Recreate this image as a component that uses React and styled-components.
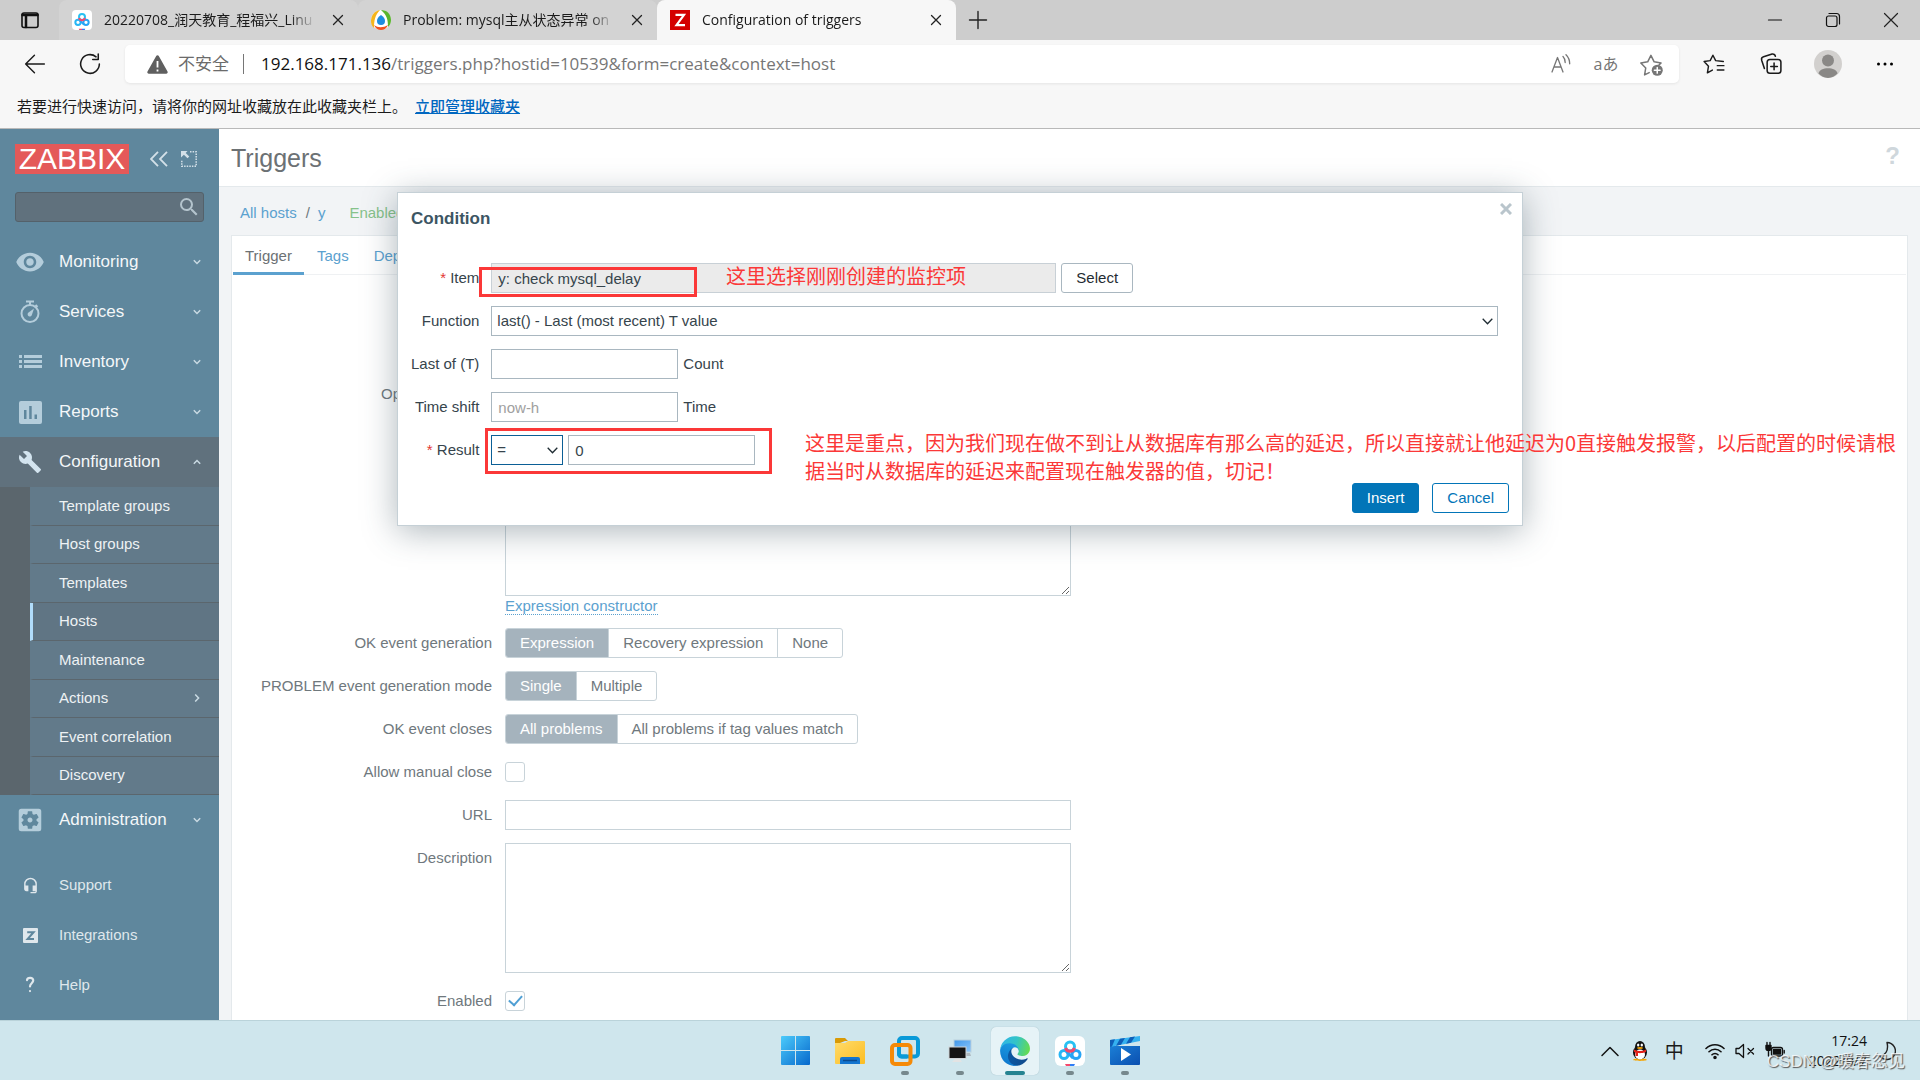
import React from 'react';
import styled, { createGlobalStyle } from 'styled-components';
import {
  MdBuild,
  MdHeadsetMic,
  MdSearch,
  MdSettingsApplications,
  MdVisibility
} from 'react-icons/md';

const uiFont = `'Open Sans', 'Noto Sans CJK SC', sans-serif`;
const pageFont = `'Liberation Sans', Arial, sans-serif`;

const GlobalStyle = createGlobalStyle`
  * {
    box-sizing: border-box;
  }

  body {
    margin: 0;
    overflow: hidden;
  }

  button, input, select, textarea {
    font: inherit;
    color: inherit;
    margin: 0;
  }

  button {
    padding: 0;
    border: 0;
    background: none;
  }

  a {
    text-decoration: none;
  }

  svg {
    display: block;
    flex: none;
  }
`;

const Screen = styled.div`
  display: flex;
  flex-direction: column;
  height: 100vh;
  font-family: ${uiFont};
`;

/* ---------- browser chrome ---------- */

const TabStrip = styled.div`
  display: flex;
  height: 40px;
  background: #cdcdcd;
`;

const TabMenuButton = styled.button`
  display: flex;
  align-items: center;
  justify-content: center;
  width: 59px;
`;

const BrowserTab = styled.div`
  display: flex;
  align-items: center;
  gap: 12px;
  width: 299px;
  padding: 0 10px 0 13px;
  border-radius: 8px 8px 0 0;
  background: ${({ $active }) => ($active ? '#f7f7f7' : '#d3d3d3')};
`;

const BrowserTabTitle = styled.span`
  flex: 1;
  overflow: hidden;
  white-space: nowrap;
  font-size: 14px;
  line-height: 24px;
  color: #1b1b1b;
  mask-image: linear-gradient(to right, #000 88%, transparent);
`;

const TabButton = styled.button`
  display: flex;
  align-items: center;
  justify-content: center;
  width: ${({ $wide }) => ($wide ? '44px' : '20px')};
  height: ${({ $wide }) => ($wide ? '40px' : '20px')};
`;

const WindowControls = styled.div`
  display: flex;
  margin-left: auto;
`;

const WindowButton = styled.button`
  display: flex;
  align-items: center;
  justify-content: center;
  width: 58px;
`;

const Toolbar = styled.div`
  display: flex;
  align-items: center;
  gap: 15px;
  height: 48px;
  padding: 0 15px;
  background: #f7f7f7;
`;

const ToolbarButton = styled.button`
  display: flex;
  align-items: center;
  justify-content: center;
  width: 40px;
  height: 36px;
  color: ${({ $muted }) => ($muted ? '#767676' : '#1b1b1b')};
  font-size: 16px;
  line-height: 20px;
`;

const ToolbarGroup = styled.div`
  display: flex;
  gap: ${({ $gap }) => $gap}px;
`;

const AddressBar = styled.div`
  display: flex;
  flex: 1;
  align-items: center;
  gap: 10px;
  height: 38px;
  padding: 0 8px 0 22px;
  border-radius: 5px;
  background: #fff;
  box-shadow: 0 1px 3px rgba(0, 0, 0, 0.08);
`;

const SecurityNote = styled.span`
  padding-right: 14px;
  border-right: 1px solid #767676;
  font-size: 17px;
  line-height: 20px;
  color: #6b6b6b;
`;

const Address = styled.div`
  flex: 1;
  padding-left: 7px;
  font-size: 17px;
  line-height: 24px;
  color: #767676;
`;

const AddressHost = styled.span`
  color: #111;
`;

const FavoritesBar = styled.div`
  display: flex;
  align-items: center;
  gap: 8px;
  height: 41px;
  padding: 0 17px 6px;
  border-bottom: 1px solid #b9b9b9;
  background: #f7f7f7;
  font-size: 15px;
  color: #1b1b1b;
`;

const FavoritesLink = styled.a`
  color: #0067c0;
  font-weight: 500;
  text-decoration: underline;
`;

/* ---------- sidebar ---------- */

const Page = styled.div`
  position: relative;
  display: flex;
  flex: 1;
  min-height: 0;
  overflow: hidden;
  font-family: ${pageFont};
  font-size: 15px;
  line-height: 20px;
`;

const Sidebar = styled.nav`
  flex: none;
  width: 219px;
  background: #5f879d;
`;

const SidebarHead = styled.div`
  display: flex;
  align-items: center;
  padding: 15px 22px 18px 15px;
`;

const Logo = styled.a`
  width: 114px;
  height: 30px;
  margin-right: 21px;
  background: #e45959;
  color: #fff;
  font-size: 30px;
  line-height: 30px;
  text-align: center;
`;

const SidebarToggles = styled.div`
  display: flex;
  gap: 13px;
`;

const SearchBox = styled.div`
  position: relative;
  margin: 0 15px 15px;
  color: #b4c4cd;

  svg {
    position: absolute;
    top: 3px;
    right: 3px;
  }
`;

const SearchInput = styled.input`
  display: block;
  width: 100%;
  height: 30px;
  border: 1px solid #54616a;
  border-radius: 3px;
  background: #60717d;
`;

const MenuItem = styled.a`
  display: flex;
  align-items: center;
  gap: 15px;
  height: 50px;
  padding: 0 18px 0 16px;
  background: ${({ $active }) => ($active ? '#60717d' : 'none')};
  color: ${({ $active }) => ($active ? '#d3e4ef' : '#b4cddb')};
`;

const MenuIcon = styled.span`
  display: flex;
  justify-content: center;
  width: 28px;
`;

const MenuLabel = styled.span`
  flex: 1;
  color: ${({ $small }) => ($small ? '#dfe7ec' : '#f4f7f9')};
  font-size: ${({ $small }) => ($small ? '15px' : '17px')};
`;

const Submenu = styled.div`
  display: grid;
  grid-auto-rows: 1fr;
  height: 308px;
  border-left: 30px solid #5b666d;
  background: #627a8a;
`;

const SubmenuItem = styled.a`
  display: flex;
  align-items: center;
  justify-content: space-between;
  padding: 0 18px 0 26px;
  border-left: 3px solid ${({ $active }) => ($active ? '#b0dcfa' : 'transparent')};
  border-bottom: 1px solid #5b666d;
  background: ${({ $active }) => ($active ? '#607584' : 'none')};
  color: #eef2f4;
`;

const SupportMenu = styled.div`
  padding-top: 15px;
`;

/* ---------- page body ---------- */

const Main = styled.main`
  display: flex;
  flex: 1;
  flex-direction: column;
  min-width: 0;
  background: #f2f4f6;
  color: #6f787d;
`;

const PageHeader = styled.header`
  display: flex;
  align-items: center;
  justify-content: space-between;
  height: 58px;
  padding: 0 20px 0 12px;
  border-bottom: 1px solid #e4e9ec;
  background: #fff;
`;

const PageTitle = styled.h1`
  margin: 0;
  font-size: 25px;
  font-weight: normal;
  line-height: 30px;
  color: #6c7174;
`;

const HelpLink = styled.a`
  padding-bottom: 4px;
  color: #cfd7dc;
  font-size: 24px;
  font-weight: bold;
`;

const Breadcrumbs = styled.div`
  display: flex;
  padding: 16px 21px 12px;
`;

const Crumb = styled.a`
  margin-right: ${({ $last }) => ($last ? '24px' : '9px')};
  color: #5ba1cf;
`;

const CrumbSlash = styled.span`
  margin-right: 8px;
`;

const HostStatus = styled.span`
  color: #86c28a;
`;

const Panel = styled.section`
  flex: 1;
  min-height: 0;
  margin: 0 12px;
  padding: 0 1px;
  border: 1px solid #e4e9ec;
  border-bottom: 0;
  background: #fff;
`;

const Tabs = styled.div`
  display: flex;
  gap: 1px;
  height: 39px;
  border-bottom: 1px solid #eff1f3;
`;

const Tab = styled.a`
  height: 39px;
  padding: 10px 12px 0;
  border-bottom: 3px solid ${({ $active }) => ($active ? '#5ba1cf' : 'transparent')};
  color: ${({ $active }) => ($active ? '#6c7174' : '#5ba1cf')};
`;

const TriggerForm = styled.form`
  display: grid;
  grid-template-columns: 259px 566px;
  column-gap: 13px;
  row-gap: 13px;
  padding-top: 104px;
`;

const FieldLabel = styled.label`
  line-height: 30px;
  text-align: right;
`;

const Field = styled.div`
  display: flex;
  flex-direction: column;
  align-items: flex-start;
  justify-content: center;
  grid-column: 2;
`;

const TextInput = styled.input`
  width: 100%;
  height: 30px;
  padding: 0 6px;
  border: 1px solid #c8d3d9;
  background: #fff;
`;

const TextArea = styled.textarea`
  display: block;
  width: 100%;
  height: ${({ $tall }) => ($tall ? '174px' : '130px')};
  border: 1px solid #c8d3d9;
  background: #fff;
  resize: vertical;
`;

const DottedLink = styled.a`
  margin-top: 2px;
  border-bottom: 1px dotted #5ba1cf;
  color: #5ba1cf;
  line-height: 16px;
`;

const Segments = styled.div`
  display: flex;
  border: 1px solid #c8d3d9;
  border-radius: 3px;
  overflow: hidden;
`;

const Segment = styled.label`
  position: relative;
  padding: 0 14px;
  line-height: 28px;

  & + & {
    border-left: 1px solid #c8d3d9;
  }

  &:has(input:checked) {
    background: #a5b3bd;
    color: #fff;
  }

  input {
    position: absolute;
    inset: 0;
    opacity: 0;
  }
`;

const Checkbox = styled.input`
  appearance: none;
  display: grid;
  place-content: center;
  width: 20px;
  height: 20px;
  border: 1px solid #c8d3d9;
  border-radius: 3px;
  background: #fff;

  &:checked::before {
    content: '';
    width: 11px;
    height: 6px;
    margin-top: -4px;
    border: solid #4f9fd4;
    border-width: 0 0 2px 2px;
    transform: rotate(-48deg);
  }
`;

/* ---------- condition dialog ---------- */

const Overlay = styled.div`
  position: absolute;
  inset: 0;
  display: flex;
  align-items: flex-start;
  justify-content: center;
  padding-top: 63px;
`;

const Dialog = styled.div`
  position: relative;
  width: 1126px;
  padding: 14px 13px 12px;
  border: 1px solid #c5d0d6;
  background: #fff;
  box-shadow: 0 5px 32px rgba(50, 72, 84, 0.4);
  color: #36444c;
`;

const DialogTitle = styled.h2`
  margin: 0 0 32px;
  font-size: 17px;
  line-height: 24px;
  color: #3c5563;
`;

const DialogClose = styled.button`
  position: absolute;
  top: 10px;
  right: 10px;
`;

const DialogForm = styled.div`
  display: grid;
  grid-template-columns: max-content 1007px;
  column-gap: 12px;
  row-gap: 13px;
`;

const Required = styled.span`
  color: #e33734;
`;

const DialogField = styled.div`
  display: flex;
  align-items: center;
  gap: 5px;
`;

const DialogInput = styled(TextInput)`
  width: ${({ $wide }) => ($wide ? '565px' : '187px')};
  border-color: ${({ readOnly }) => (readOnly ? '#c8d0d6' : '#a9b7c0')};
  background: ${({ readOnly }) => (readOnly ? '#ebebeb' : '#fff')};

  &::placeholder {
    color: #a0a0a0;
  }
`;

const SelectBox = styled.div`
  position: relative;
  width: ${({ $small }) => ($small ? '72px' : '100%')};

  svg {
    position: absolute;
    top: 12px;
    right: 5px;
    pointer-events: none;
  }
`;

const Select = styled.select`
  appearance: none;
  display: block;
  width: 100%;
  height: 30px;
  padding: 0 5px;
  border: 1px solid ${({ $focused }) => ($focused ? '#0b5f96' : '#a9b7c0')};
  border-radius: 0;
  background: #fff;
`;

const Button = styled.button`
  height: 30px;
  padding: 0 14px;
  border: 1px solid ${({ $kind }) => ($kind ? '#0275b8' : '#a9b7c0')};
  border-radius: 3px;
  background: ${({ $kind }) => ($kind === 'primary' ? '#0275b8' : '#fff')};
  color: ${({ $kind }) =>
    $kind === 'primary' ? '#fff' : $kind === 'outline' ? '#0275b8' : '#1f2c33'};
`;

const DialogFooter = styled.div`
  display: flex;
  justify-content: flex-end;
  gap: 13px;
  margin-top: 18px;
`;

// Red frames and notes drawn over the dialog
const Mark = styled.div`
  position: absolute;
  top: ${({ $top }) => $top}px;
  left: ${({ $left }) => $left}px;
  width: ${({ $width }) => $width}px;
  height: ${({ $height }) => $height}px;
  border: 3px solid #fb3838;
  pointer-events: none;
`;

const Note = styled.p`
  position: absolute;
  top: ${({ $top }) => $top}px;
  left: ${({ $left }) => $left}px;
  margin: 0;
  color: #fb3838;
  font-family: 'Noto Sans CJK SC', sans-serif;
  font-size: 20px;
  line-height: 28px;
  white-space: nowrap;
`;

/* ---------- taskbar ---------- */

const Taskbar = styled.footer`
  position: relative;
  display: grid;
  grid-template-columns: 1fr auto 1fr;
  align-items: center;
  height: 60px;
  border-top: 1px solid #bad3da;
  background: #cfe6ed;
`;

const Apps = styled.div`
  display: flex;
  grid-column: 2;
  gap: 7px;
`;

const AppButton = styled.button`
  position: relative;
  display: flex;
  align-items: center;
  justify-content: center;
  width: 48px;
  height: 48px;
  border-radius: 5px;
  background: ${({ $state }) => ($state === 'active' ? '#e6f3f7' : 'none')};
  box-shadow: ${({ $state }) =>
    $state === 'active' ? '0 0 1px rgba(0, 60, 80, 0.3)' : 'none'};

  &::after {
    content: '';
    position: absolute;
    bottom: 0;
    width: ${({ $state }) => ($state === 'active' ? '20px' : '8px')};
    height: 4px;
    border-radius: 2px;
    background: ${({ $state }) =>
      $state === 'active' ? '#268391' : $state ? '#76888d' : 'none'};
  }
`;

const Tray = styled.div`
  display: flex;
  align-items: center;
  justify-content: flex-end;
  padding-right: 24px;
`;

const TrayGroup = styled.div`
  display: flex;
  align-items: center;
  gap: 10px;
  margin-right: ${({ $space }) => $space}px;
`;

const InputMode = styled.span`
  width: 20px;
  font-size: 19px;
  line-height: 24px;
  color: #1b1b1b;
`;

const Clock = styled.div`
  margin-right: 12px;
  font-size: 14px;
  line-height: 20px;
  text-align: right;
  color: #111;
`;

const Watermark = styled.div`
  position: absolute;
  right: 15px;
  bottom: 5px;
  color: rgba(255, 255, 255, 0.75);
  font-family: 'Liberation Sans', 'Noto Sans CJK SC', sans-serif;
  font-size: 17px;
  line-height: 26px;
  text-shadow: 1px 1px 1px #555;
  white-space: nowrap;
`;

/* ---------- icons ---------- */

const Stroke = ({ size = 20, width = 1.5, color = 'currentColor', children }) => (
  <svg
    width={size}
    height={size}
    viewBox="0 0 20 20"
    fill="none"
    stroke={color}
    strokeWidth={width}
    strokeLinecap="round"
    strokeLinejoin="round"
  >
    {children}
  </svg>
);

const Chevron = ({ dir = 'down' }) => (
  <svg width="8" height="8" viewBox="0 0 8 8" fill="none" stroke="#c9dae3" strokeWidth="1.5">
    {dir === 'down' && <path d="M.8 2.2 4 5.5l3.2-3.3" />}
    {dir === 'up' && <path d="M.8 5.8 4 2.5l3.2 3.3" />}
    {dir === 'right' && <path d="M2.2.5 5.6 4 2.2 7.5" />}
  </svg>
);

const SelectArrow = () => (
  <svg width="11" height="7" viewBox="0 0 11 7" fill="none" stroke="#1f2c33" strokeWidth="1.3">
    <path d="m.7.8 4.8 5 4.8-5" />
  </svg>
);

const CloseIcon = () => (
  <Stroke size={20} width={1.3} color="#222">
    <path d="m5.5 5.5 9 9m0-9-9 9" />
  </Stroke>
);

const TimerIcon = () => (
  <svg width="20" height="24" viewBox="0 0 20 24" fill="none" stroke="currentColor">
    <circle cx="10" cy="13.5" r="8.5" strokeWidth="2" />
    <path d="M6 1.5h8M10 2v3M15.5 5l2 2" strokeWidth="2" />
    <path d="m14 8.5-2 6a2.2 2.2 0 1 1-3.500-2z" fill="currentColor" stroke="none" />
  </svg>
);

const ListIcon = () => (
  <svg width="23" height="14" viewBox="0 0 23 14" fill="currentColor">
    <path d="M0 0h3v3H0zM5 0h18v3H5zM0 5h3v3H0zM5 5h18v3H5zM0 10h3v3H0zM5 10h18v3H5z" />
  </svg>
);

const ReportsIcon = () => (
  <svg width="23" height="23" viewBox="0 0 23 23">
    <rect width="23" height="23" rx="2" fill="currentColor" />
    <path d="M5 9h2.500v9H5zM10.200 5h2.500v13h-2.500zM15.500 13.500H18V18h-2.500z" fill="#5f879d" />
  </svg>
);

const KioskIcon = () => (
  <svg width="16" height="16" viewBox="0 0 16 16" fill="none" stroke="#d3e0e8" strokeWidth="1.5">
    <path d="M9 .8h6.200v14.400H.8V9" strokeDasharray="1.500 1.100" />
    <path d="M0 0h6.500L4.700 1.900l3.600 3.600-1.800 1.800-3.600-3.600L0 6.500z" fill="#d3e0e8" stroke="none" />
  </svg>
);

const ZIcon = () => (
  <svg width="15" height="15" viewBox="0 0 15 15">
    <rect width="15" height="15" rx="1" fill="#dfe7ec" />
    <path d="M4.200 4.200h6.400l-6 6.800h6.400" fill="none" stroke="#5f879d" strokeWidth="2" />
  </svg>
);

const BaiduIcon = ({ size }) => (
  <svg width={size} height={size} viewBox="0 0 30 30" fill="none">
    <rect width="30" height="30" rx="6" fill="#fff" />
    <circle cx="9" cy="18.500" r="4" stroke="#27b6f5" strokeWidth="3" />
    <circle cx="21" cy="18.500" r="4" stroke="#27a4f5" strokeWidth="3" />
    <path d="m11.500 15.500 6.500 6.500" stroke="#27a4f5" strokeWidth="3" />
    <circle cx="15" cy="10.500" r="4.500" stroke="#27c1f2" strokeWidth="3" />
    <path d="M10.600 12a4.600 4.600 0 0 0 8.800 0" stroke="#f4496d" strokeWidth="3" />
    <path d="M10 28h5v2h-4z" fill="#f4496d" />
    <path d="M15 28h5l-1 2h-4z" fill="#2f7df6" />
  </svg>
);

const RingIcon = () => (
  <svg width="20" height="20" viewBox="0 0 20 20">
    <circle cx="10" cy="10" r="10" fill="#fff" />
    <path d="M9 0C3 1 0 6 0 11c0 3 1 5 3 7 0-7 1-13 6-18z" fill="#f5b51b" />
    <path d="M10 0c6 0 10 4 10 10 0 3-1 5-3 7 0-7-1-12-7-17z" fill="#59b52c" />
    <path d="M3 15c4 3 9 3 14 0-1 3-4 5-7 5s-6-2-7-5z" fill="#f0531f" />
    <path d="M10 5c3 2 4 4 4 6a4 4 0 0 1-8 0c0-2 1-4 4-6z" fill="#1c8ce0" />
  </svg>
);

const WindowsIcon = () => (
  <svg width="29" height="29" viewBox="0 0 29 29">
    <defs>
      <linearGradient id="win" x1="0" y1="0" x2="29" y2="29" gradientUnits="userSpaceOnUse">
        <stop offset="0" stopColor="#4ccbfb" />
        <stop offset="1" stopColor="#0668cc" />
      </linearGradient>
    </defs>
    <path d="M0 1a1 1 0 0 1 1-1h13v14H0zM15 0h13a1 1 0 0 1 1 1v13H15zM0 15h14v14H1a1 1 0 0 1-1-1zM15 15h14v13a1 1 0 0 1-1 1H15z" fill="url(#win)" />
  </svg>
);

const FolderIcon = () => (
  <svg width="30" height="28" viewBox="0 0 30 28">
    <defs>
      <linearGradient id="folder" x1="0" y1="0" x2="1" y2="1">
        <stop offset="0" stopColor="#ffdb6b" />
        <stop offset="1" stopColor="#fcbd22" />
      </linearGradient>
    </defs>
    <path d="M0 2a1 1 0 0 1 1-1h9l3 3h-3L0 8z" fill="#d99a05" />
    <path d="M0 6h10l3-2h16a1 1 0 0 1 1 1v21a1 1 0 0 1-1 1H1a1 1 0 0 1-1-1z" fill="url(#folder)" />
    <path d="M5 27v-5a2 2 0 0 1 2-2h16a2 2 0 0 1 2 2v5z" fill="#1475cf" />
    <path d="M8 23.500h14" stroke="#0b4a8f" strokeWidth="1.500" />
  </svg>
);

const VmwareIcon = () => (
  <svg width="30" height="30" viewBox="0 0 30 30" fill="none" strokeWidth="4">
    <rect x="9" y="2" width="19" height="18.500" rx="3" stroke="#0a9ad8" />
    <rect x="2" y="9" width="18.500" height="19" rx="3" stroke="#f58a07" />
    <path d="M9 14v4a2.500 2.500 0 0 0 2.500 2.500H17" stroke="#0a9ad8" />
  </svg>
);

const RemoteIcon = () => (
  <svg width="24" height="24" viewBox="0 0 24 24">
    <defs>
      <linearGradient id="remote" x1="0" y1="0" x2="1" y2="1">
        <stop offset="0" stopColor="#3f97ea" />
        <stop offset="1" stopColor="#8cc6fa" />
      </linearGradient>
    </defs>
    <rect x="6" y="1" width="17" height="12" fill="url(#remote)" stroke="#b9cfde" />
    <path d="M18 14h4l1 3h-5z" fill="#aeb9c0" />
    <rect x="1" y="8" width="17" height="11.500" fill="#141414" stroke="#cfd4d8" />
    <path d="M7 20h5l2 3H4z" fill="#e3e3e3" />
  </svg>
);

const EdgeIcon = () => (
  <svg width="30" height="30" viewBox="4 4 257 257">
    <defs>
      <linearGradient id="edgeA" x1="0" y1="0" x2="1" y2="0">
        <stop offset="0" stopColor="#0c59a4" />
        <stop offset="1" stopColor="#114a8b" />
      </linearGradient>
      <linearGradient id="edgeB" x1="0.600" y1="0" x2="0.300" y2="1">
        <stop offset="0" stopColor="#1b9de2" />
        <stop offset="1" stopColor="#0d75cc" />
      </linearGradient>
      <linearGradient id="edgeC" x1="0" y1="0.400" x2="1" y2="0.600">
        <stop offset="0" stopColor="#2fb5e8" />
        <stop offset="0.500" stopColor="#33c4c6" />
        <stop offset="1" stopColor="#66dc4e" />
      </linearGradient>
    </defs>
    <path
      fill="url(#edgeA)"
      d="M235.680 195.460a93.730 93.730 0 01-10.540 4.710 101.870 101.870 0 01-35.900 6.460c-47.320 0-88.540-32.550-88.540-74.320A31.480 31.480 0 01117.130 105c-42.800 1.800-53.800 46.400-53.800 72.530 0 73.880 68.090 81.370 82.760 81.370 7.910 0 19.840-2.300 27-4.560l1.310-.440a128.340 128.340 0 0066.600-52.800 4 4 0 00-5.320-5.640z"
    />
    <path
      fill="url(#edgeB)"
      d="M110.340 246.340A79.200 79.200 0 0187.600 225a80.720 80.720 0 0129.530-120c3.120-1.470 8.450-4.130 15.540-4a32.350 32.350 0 0125.690 13 31.880 31.880 0 016.360 18.660c0-.210 24.460-79.600-80-79.600-43.900 0-80 41.660-80 78.210a130.150 130.150 0 0012.110 56 128 128 0 00156.380 67.110 75.550 75.550 0 01-62.780-8z"
    />
    <path
      fill="url(#edgeC)"
      d="M156.940 153.780c-.810 1.050-3.300 2.500-3.300 5.660 0 2.610 1.700 5.120 4.720 7.230 14.380 10 41.490 8.680 41.560 8.680a59.560 59.560 0 0030.270-8.350 61.380 61.380 0 0030.430-52.880c.260-22.410-8-37.310-11.340-43.910C228.090 28.760 182.350 5.080 132.610 5.080A128 128 0 004.630 131.270c.480-36.540 36.800-66.050 80-66.050 3.500 0 23.460.340 42 10.070 16.340 8.580 24.900 18.940 30.850 29.210 6.180 10.670 7.280 24.150 7.280 29.520s-2.740 13.330-7.820 19.760z"
    />
  </svg>
);

const VideoIcon = () => (
  <svg width="30" height="29" viewBox="0 0 30 29">
    <defs>
      <linearGradient id="video" x1="0" y1="0" x2="1" y2="1">
        <stop offset="0" stopColor="#1b7fd6" />
        <stop offset="1" stopColor="#0b4fb0" />
      </linearGradient>
    </defs>
    <path d="M0 10h30v18a1 1 0 0 1-1 1H1a1 1 0 0 1-1-1z" fill="url(#video)" />
    <path d="M0 4 30 0v5L0 11z" fill="#35b1f0" />
    <path d="m0 4 5-.700-3 7.300-2 .400zM10 2.700l5-.700-4 6.800-5 1zM20 1.300l5-.700-4 6.200-5 1z" fill="#0f5fb8" />
    <path d="M11 12v13l10-6.500z" fill="#fff" />
  </svg>
);

const QQIcon = () => (
  <svg width="20" height="20" viewBox="0 0 20 20">
    <ellipse cx="10" cy="11.500" rx="7" ry="7" fill="#111" />
    <ellipse cx="10" cy="6" rx="5" ry="6" fill="#111" />
    <ellipse cx="10" cy="13.500" rx="5" ry="5" fill="#fff" />
    <ellipse cx="8.200" cy="4" rx="1.200" ry="1.600" fill="#fff" />
    <ellipse cx="11.800" cy="4" rx="1.200" ry="1.600" fill="#fff" />
    <ellipse cx="10" cy="7" rx="3" ry="1" fill="#f6a500" />
    <path d="M4 8.500c4 2 8 2 12 0v2.500c-3 1-5 1.300-8 1.100V15H5.500v-3.500L4 11z" fill="#e2231a" />
    <path d="M3 18.800c1-1.500 5-1.500 7 0 2-1.500 6-1.500 7 0 0 1.500-14 1.500-14 0z" fill="#f6a500" />
  </svg>
);

/* ---------- data ---------- */

const browserTabs = [
  { title: '20220708_润天教育_程福兴_Linu', icon: <BaiduIcon size={20} /> },
  { title: 'Problem: mysql主从状态异常 on', icon: <RingIcon /> },
  {
    title: 'Configuration of triggers',
    active: true,
    icon: (
      <svg width="20" height="20" viewBox="0 0 20 20">
        <rect width="20" height="20" fill="#d40000" />
        <path d="M5.500 4.800h8.500L6.500 15.200h8.500" fill="none" stroke="#fff" strokeWidth="2.200" />
      </svg>
    )
  }
];

const menu = [
  { label: 'Monitoring', icon: <MdVisibility size={30} /> },
  { label: 'Services', icon: <TimerIcon /> },
  { label: 'Inventory', icon: <ListIcon /> },
  { label: 'Reports', icon: <ReportsIcon /> }
];

const submenu = [
  'Template groups',
  'Host groups',
  'Templates',
  'Hosts',
  'Maintenance',
  'Actions',
  'Event correlation',
  'Discovery'
];

const supportMenu = [
  { label: 'Support', icon: <MdHeadsetMic size={17} color="#dfe7ec" /> },
  { label: 'Integrations', icon: <ZIcon /> },
  {
    label: 'Help',
    icon: (
      <Stroke size={20} width={2.2} color="#dfe7ec">
        <path d="M7 5.200c.500-3.200 6.500-3 6.200.500-.200 2.600-3.200 2.600-3.200 5.800M10 16v.100" />
      </Stroke>
    )
  }
];

const apps = [
  { name: 'Start', icon: <WindowsIcon /> },
  { name: 'File Explorer', icon: <FolderIcon /> },
  { name: 'VMware', icon: <VmwareIcon />, state: 'open' },
  { name: 'Remote', icon: <RemoteIcon />, state: 'open' },
  { name: 'Edge', icon: <EdgeIcon />, state: 'active' },
  { name: 'Netdisk', icon: <BaiduIcon size={30} />, state: 'open' },
  { name: 'Video', icon: <VideoIcon />, state: 'open' }
];

/* ---------- components ---------- */

const Browser = () => (
  <>
    <TabStrip>
      <TabMenuButton aria-label="Tab actions">
        <Stroke color="#111" width={1.6}>
          <rect x="2" y="3" width="16" height="14.500" rx="2" />
          <path d="M2.500 5h15M6 6v11" strokeWidth="2.500" />
        </Stroke>
      </TabMenuButton>
      {browserTabs.map(({ title, icon, active }) => (
        <BrowserTab key={title} $active={active}>
          {icon}
          <BrowserTabTitle>{title}</BrowserTabTitle>
          <TabButton aria-label="Close tab">
            <CloseIcon />
          </TabButton>
        </BrowserTab>
      ))}
      <TabButton $wide aria-label="New tab">
        <Stroke color="#222" width={1.4}>
          <path d="M10 1.500v17M1.500 10h17" />
        </Stroke>
      </TabButton>
      <WindowControls>
        <WindowButton aria-label="Minimize">
          <Stroke color="#111" width={1.2}>
            <path d="M3.500 10h13" />
          </Stroke>
        </WindowButton>
        <WindowButton aria-label="Restore">
          <Stroke color="#111" width={1.2}>
            <rect x="3.500" y="6" width="10.500" height="10.500" rx="2" />
            <path d="M6 3.500h7.500a3 3 0 0 1 3 3V14" />
          </Stroke>
        </WindowButton>
        <WindowButton aria-label="Close">
          <Stroke color="#222" width={1.2}>
            <path d="m3.500 3.500 13 13m0-13-13 13" />
          </Stroke>
        </WindowButton>
      </WindowControls>
    </TabStrip>

    <Toolbar>
      <ToolbarButton aria-label="Back">
        <Stroke size={22} width={1.3}>
          <path d="M18.500 10h-17m8-8-8 8 8 8" />
        </Stroke>
      </ToolbarButton>
      <ToolbarButton aria-label="Refresh">
        <Stroke size={22} width={1.4}>
          <path d="M18.500 10A8.500 8.500 0 1 1 15.500 3.500M17.500 1v5h-5" />
        </Stroke>
      </ToolbarButton>
      <AddressBar>
        <svg width="21" height="19" viewBox="0 0 21 19">
          <path d="M9.200 1a1.500 1.500 0 0 1 2.600 0l8.700 15.500a1.500 1.500 0 0 1-1.300 2.200H1.800a1.500 1.500 0 0 1-1.300-2.200z" fill="#5f5f5f" />
          <path d="M10.500 6v6.500M10.500 14.500v2" stroke="#fff" strokeWidth="1.800" />
        </svg>
        <SecurityNote>不安全</SecurityNote>
        <Address>
          <AddressHost>192.168.171.136</AddressHost>
          /triggers.php?hostid=10539&amp;form=create&amp;context=host
        </Address>
        <ToolbarGroup $gap={5}>
          <ToolbarButton $muted aria-label="Read aloud">
            <Stroke width={1.3}>
              <path d="m1 18 5.500-14.500L12 18M3 13h7M12 2.500c1.500 1.500 2.200 3.500 2.200 6M15 .8c2.500 2.500 3.700 5.500 3.700 9" />
            </Stroke>
          </ToolbarButton>
          <ToolbarButton $muted>aあ</ToolbarButton>
          <ToolbarButton $muted aria-label="Add favorite">
            <Stroke size={23} width={1.3}>
              <path d="m8 17-4 2 1-6-4.300-4.300 6-1L9.500 2l2.800 5.700 6 1-2 2" />
              <circle cx="15" cy="15" r="4.800" fill="#767676" stroke="none" />
              <path d="M15 12.500v5M12.500 15h5" stroke="#fff" />
            </Stroke>
          </ToolbarButton>
        </ToolbarGroup>
      </AddressBar>
      <ToolbarGroup $gap={17}>
        <ToolbarButton aria-label="Favorites">
          <Stroke size={22} width={1.3}>
            <path d="m8.500 15.500-4.500 2.500 1-6L1 7.700l5.500-.8L9 2l2.500 4.900 7 .8M13 11.500h6M13 15.500h6" />
          </Stroke>
        </ToolbarButton>
        <ToolbarButton aria-label="Collections">
          <Stroke size={22} width={1.4}>
            <rect x="6.500" y="6" width="12.500" height="12.500" rx="2.500" />
            <path d="M12.800 9.200v6M9.800 12.200h6M4 14 1.500 6.500a2.500 2.500 0 0 1 1.700-3L11 1a2.500 2.500 0 0 1 3 2" />
          </Stroke>
        </ToolbarButton>
        <ToolbarButton aria-label="Profile">
          <svg width="28" height="28" viewBox="0 0 28 28">
            <circle cx="14" cy="14" r="14" fill="#d2d0ce" />
            <circle cx="14" cy="10.500" r="6" fill="#8a8886" />
            <path d="M4.500 23.500c1-7 18-7 19 0A14 14 0 0 1 14 28a14 14 0 0 1-9.500-4.500z" fill="#8a8886" />
          </svg>
        </ToolbarButton>
        <ToolbarButton aria-label="Settings and more">
          <svg width="18" height="4" viewBox="0 0 18 4">
            <circle cx="2.500" cy="2" r="1.500" />
            <circle cx="9" cy="2" r="1.500" />
            <circle cx="15.500" cy="2" r="1.500" />
          </svg>
        </ToolbarButton>
      </ToolbarGroup>
    </Toolbar>

    <FavoritesBar>
      <span>若要进行快速访问，请将你的网址收藏放在此收藏夹栏上。</span>
      <FavoritesLink href="#favorites">立即管理收藏夹</FavoritesLink>
    </FavoritesBar>
  </>
);

const SideNav = () => (
  <Sidebar>
    <SidebarHead>
      <Logo href="#dashboard">ZABBIX</Logo>
      <SidebarToggles>
        <svg width="18" height="16" viewBox="0 0 18 16" fill="none" stroke="#d3e0e8" strokeWidth="1.800">
          <path d="M8 .8 1 8l7 7.200M17 .8 10 8l7 7.200" />
        </svg>
        <KioskIcon />
      </SidebarToggles>
    </SidebarHead>
    <SearchBox>
      <SearchInput type="text" aria-label="Search" />
      <MdSearch size={24} />
    </SearchBox>
    {menu.map(({ label, icon }) => (
      <MenuItem key={label} href="#menu">
        <MenuIcon>{icon}</MenuIcon>
        <MenuLabel>{label}</MenuLabel>
        <Chevron />
      </MenuItem>
    ))}
    <MenuItem $active href="#configuration">
      <MenuIcon>
        <MdBuild size={24} />
      </MenuIcon>
      <MenuLabel>Configuration</MenuLabel>
      <Chevron dir="up" />
    </MenuItem>
    <Submenu>
      {submenu.map(label => (
        <SubmenuItem key={label} href="#submenu" $active={label === 'Hosts'}>
          {label}
          {label === 'Actions' && <Chevron dir="right" />}
        </SubmenuItem>
      ))}
    </Submenu>
    <MenuItem href="#administration">
      <MenuIcon>
        <MdSettingsApplications size={30} />
      </MenuIcon>
      <MenuLabel>Administration</MenuLabel>
      <Chevron />
    </MenuItem>
    <SupportMenu>
      {supportMenu.map(({ label, icon }) => (
        <MenuItem key={label} href="#support">
          <MenuIcon>{icon}</MenuIcon>
          <MenuLabel $small>{label}</MenuLabel>
        </MenuItem>
      ))}
    </SupportMenu>
  </Sidebar>
);

const RadioRow = ({ label, name, options }) => (
  <>
    <FieldLabel as="span" id={name}>
      {label}
    </FieldLabel>
    <Field>
      <Segments role="radiogroup" aria-labelledby={name}>
        {options.map((option, i) => (
          <Segment key={option}>
            <input type="radio" name={name} defaultChecked={i === 0} />
            {option}
          </Segment>
        ))}
      </Segments>
    </Field>
  </>
);

const TriggerPage = () => (
  <Main>
    <PageHeader>
      <PageTitle>Triggers</PageTitle>
      <HelpLink href="#help">?</HelpLink>
    </PageHeader>
    <Breadcrumbs>
      <Crumb href="#hosts">All hosts</Crumb>
      <CrumbSlash>/</CrumbSlash>
      <Crumb $last href="#host">
        y
      </Crumb>
      <HostStatus>Enabled</HostStatus>
    </Breadcrumbs>
    <Panel>
      <Tabs>
        <Tab $active href="#trigger">
          Trigger
        </Tab>
        <Tab href="#tags">Tags</Tab>
        <Tab href="#dependencies">Dependencies</Tab>
      </Tabs>
      <TriggerForm>
        <FieldLabel htmlFor="opdata">Operational data</FieldLabel>
        <Field>
          <TextInput id="opdata" />
        </Field>
        <Field>
          <TextArea $tall aria-label="Expression" />
          <DottedLink href="#constructor">Expression constructor</DottedLink>
        </Field>
        <RadioRow
          label="OK event generation"
          name="recovery"
          options={['Expression', 'Recovery expression', 'None']}
        />
        <RadioRow
          label="PROBLEM event generation mode"
          name="mode"
          options={['Single', 'Multiple']}
        />
        <RadioRow
          label="OK event closes"
          name="closes"
          options={['All problems', 'All problems if tag values match']}
        />
        <FieldLabel htmlFor="manual">Allow manual close</FieldLabel>
        <Field>
          <Checkbox id="manual" type="checkbox" />
        </Field>
        <FieldLabel htmlFor="url">URL</FieldLabel>
        <Field>
          <TextInput id="url" />
        </Field>
        <FieldLabel htmlFor="description">Description</FieldLabel>
        <Field>
          <TextArea id="description" />
        </Field>
        <FieldLabel htmlFor="enabled">Enabled</FieldLabel>
        <Field>
          <Checkbox id="enabled" type="checkbox" defaultChecked />
        </Field>
      </TriggerForm>
    </Panel>
  </Main>
);

const ConditionDialog = () => (
  <Overlay>
    <Dialog role="dialog" aria-labelledby="dialog-title">
      <DialogTitle id="dialog-title">Condition</DialogTitle>
      <DialogClose aria-label="Close dialog">
        <svg width="12" height="12" viewBox="0 0 12 12" stroke="#b9c5cc" strokeWidth="3">
          <path d="m1 1 10 10M11 1 1 11" />
        </svg>
      </DialogClose>
      <DialogForm>
        <FieldLabel htmlFor="item">
          <Required>*</Required> Item
        </FieldLabel>
        <DialogField>
          <DialogInput id="item" $wide readOnly value="y: check mysql_delay" />
          <Button type="button">Select</Button>
        </DialogField>
        <FieldLabel htmlFor="function">Function</FieldLabel>
        <DialogField>
          <SelectBox>
            <Select id="function">
              <option>last() - Last (most recent) T value</option>
            </Select>
            <SelectArrow />
          </SelectBox>
        </DialogField>
        <FieldLabel htmlFor="last">Last of (T)</FieldLabel>
        <DialogField>
          <DialogInput id="last" />
          Count
        </DialogField>
        <FieldLabel htmlFor="shift">Time shift</FieldLabel>
        <DialogField>
          <DialogInput id="shift" placeholder="now-h" />
          Time
        </DialogField>
        <FieldLabel htmlFor="result">
          <Required>*</Required> Result
        </FieldLabel>
        <DialogField>
          <SelectBox $small>
            <Select $focused aria-label="Operator">
              <option>=</option>
            </Select>
            <SelectArrow />
          </SelectBox>
          <DialogInput id="result" defaultValue="0" />
        </DialogField>
      </DialogForm>
      <DialogFooter>
        <Button type="button" $kind="primary">
          Insert
        </Button>
        <Button type="button" $kind="outline">
          Cancel
        </Button>
      </DialogFooter>

      <Mark $top={74} $left={81} $width={218} $height={30} />
      <Mark $top={235} $left={87} $width={287} $height={46} />
      <Note $top={69} $left={328}>
        这里选择刚刚创建的监控项
      </Note>
      <Note $top={236} $left={407}>
        这里是重点，因为我们现在做不到让从数据库有那么高的延迟，所以直接就让他延迟为0直接触发报警，以后配置的时候请根
        <br />
        据当时从数据库的延迟来配置现在触发器的值，切记！
      </Note>
    </Dialog>
  </Overlay>
);

const App = () => (
  <Screen>
    <GlobalStyle />
    <Browser />
    <Page>
      <SideNav />
      <TriggerPage />
      <ConditionDialog />
    </Page>
    <Taskbar>
      <Apps>
        {apps.map(({ name, icon, state }) => (
          <AppButton key={name} aria-label={name} $state={state}>
            {icon}
          </AppButton>
        ))}
      </Apps>
      <Tray>
        <TrayGroup $space={15}>
          <Stroke color="#111">
            <path d="m2 14.500 8-8 8 8" />
          </Stroke>
          <QQIcon />
        </TrayGroup>
        <TrayGroup $space={20}>
          <InputMode>中</InputMode>
        </TrayGroup>
        <TrayGroup $space={24}>
          <Stroke color="#111" width={1.6}>
            <path d="M1 7.500a12.700 12.700 0 0 1 18 0M4 10.700a8.500 8.500 0 0 1 12 0M7 13.800a4.200 4.200 0 0 1 6 0" />
            <circle cx="10" cy="16.500" r="1" fill="#111" />
          </Stroke>
          <Stroke color="#111" width={1.3}>
            <path d="M1 7.500v5h3l4.500 4v-13l-4.500 4zM13 7.500l5.500 5.500m0-5.500L13 13" />
          </Stroke>
          <Stroke color="#111" width={1.4}>
            <rect x="6.500" y="6.500" width="11" height="8.500" rx="2" />
            <rect x="8.500" y="8.500" width="7" height="4.500" fill="#111" />
            <path d="M19.200 9.500v2.500M1 4.500h5v2.500a2 2 0 0 1-5 0zM2 1.500v2M5 1.500v2M3.500 9v6" fill="#111" />
          </Stroke>
        </TrayGroup>
        <Clock>
          <div>17:24</div>
          <div>2022/9/7</div>
        </Clock>
        <svg width="17" height="20" viewBox="0 0 17 20" fill="none" stroke="#222" strokeWidth="1.400">
          <path d="M8 1.500a8.500 8.500 0 1 1-7 13.500c5-.500 9-5 7-13.500z" strokeLinejoin="round" />
        </svg>
      </Tray>
      <Watermark>CSDN @暖春忽见</Watermark>
    </Taskbar>
  </Screen>
);

export default App;
